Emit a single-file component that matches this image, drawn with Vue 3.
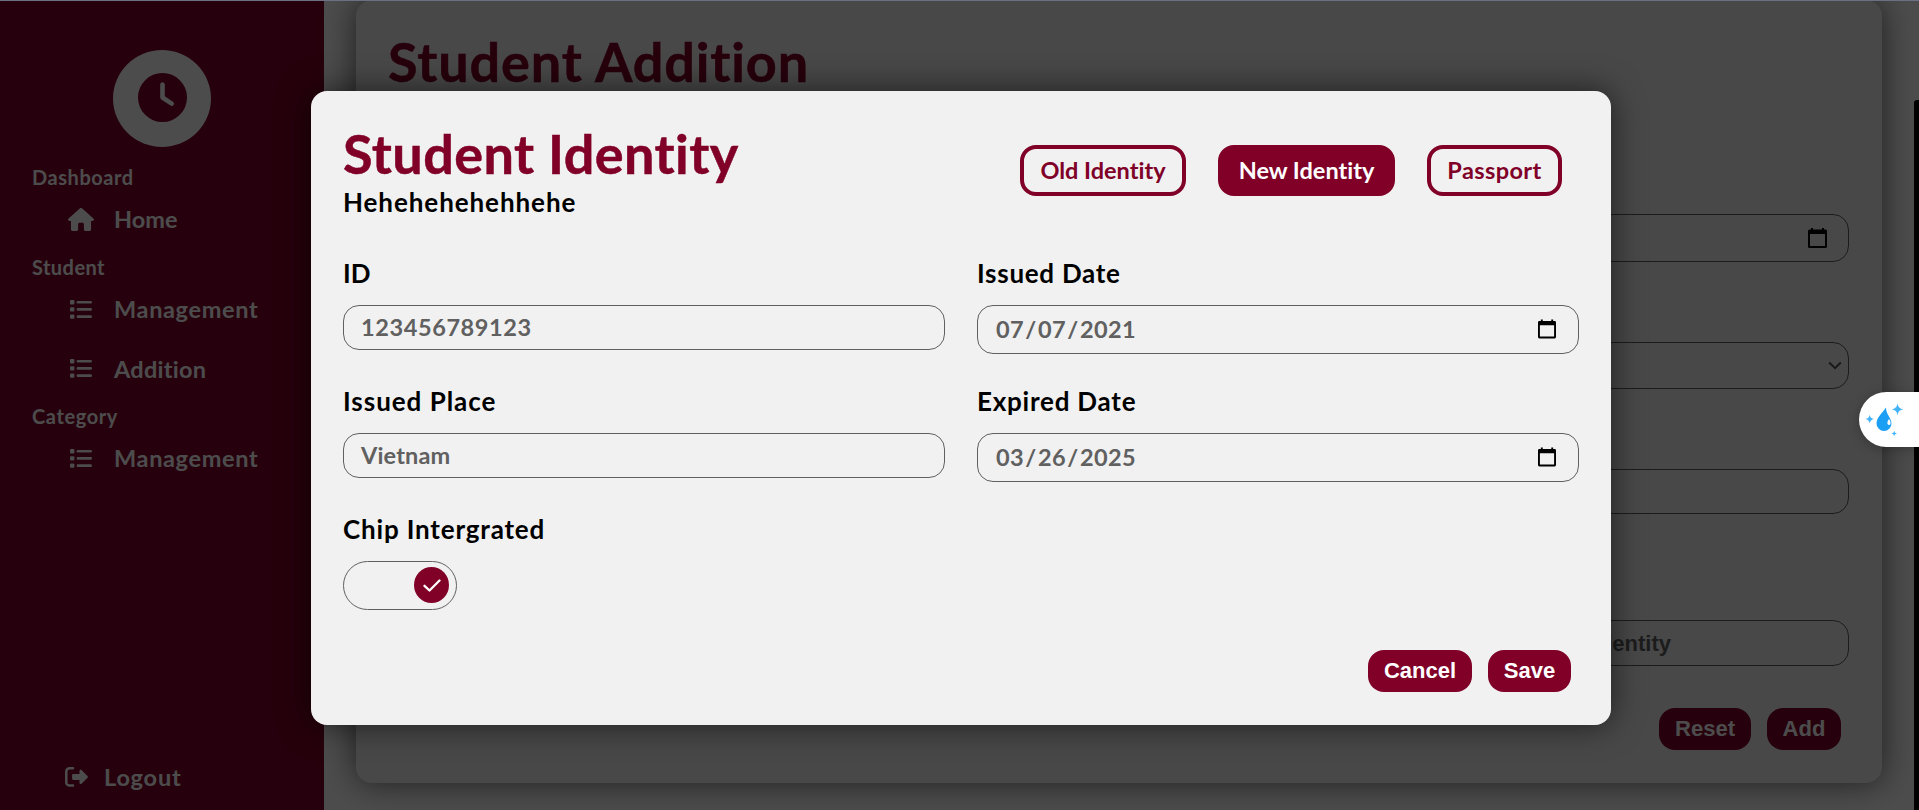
<script setup>
import { ref } from 'vue'

const menu = [
  { title: 'Dashboard', cls: 't-dash', items: [{ label: 'Home', icon: 'home', cls: 't-home' }] },
  {
    title: 'Student',
    cls: 't-student',
    items: [
      { label: 'Management', icon: 'list', cls: 't-manage' },
      { label: 'Addition', icon: 'list', cls: 't-addition' },
    ],
  },
  { title: 'Category', cls: 't-category', items: [{ label: 'Management', icon: 'list', cls: 't-manage' }] },
]
const tabs = [
  { label: 'Old Identity', cls: 'tab-old' },
  { label: 'New Identity', cls: 'tab-new' },
  { label: 'Passport', cls: 'tab-pass' },
]
const active = ref('New Identity')
const chip = ref(true)
</script>

<template>
  <div class="page">
    <aside class="sidebar">
      <div class="logo">
        <svg viewBox="0 0 512 512" width="49" height="49">
          <path fill="#800028" d="M256 0a256 256 0 1 1 0 512A256 256 0 1 1 256 0zM232 120V256c0 8 4 15.500 10.700 20l96 64c11 7.400 25.900 4.400 33.300-6.700s4.400-25.900-6.700-33.300L280 243.200V120c0-13.300-10.700-24-24-24s-24 10.700-24 24z" />
        </svg>
      </div>
      <nav class="menu">
        <section v-for="group in menu" :key="group.title">
          <h4 class="group"><span :class="group.cls">{{ group.title }}</span></h4>
          <a v-for="item in group.items" :key="item.label" class="item">
            <svg v-if="item.icon === 'home'" class="home-icon" viewBox="0 0 576 512" width="26" height="23">
              <path fill="#fff" d="M575.800 255.500c0 18-15 32.100-32 32.100h-32l.7 160.200c0 2.700-.2 5.400-.5 8.100V472c0 22.100-17.900 40-40 40H392c-22.100 0-40-17.900-40-40V360c0-17.700-14.300-32-32-32h-64c-17.700 0-32 14.300-32 32v112c0 22.100-17.900 40-40 40H104c-22.100 0-40-17.900-40-40V287.600H32c-18 0-32-14-32-32.100 0-9 3-17 10-24L266.400 8c7-7 15-8 22-8s15 2 21 7L564.800 231.500c8 7 12 15 11 24z" />
            </svg>
            <svg v-else class="list-icon" viewBox="0 0 22 19" width="22" height="19" fill="#fff">
              <rect x="0" y="0" width="4.400" height="4.400" rx="1" /><rect x="0" y="7.200" width="4.400" height="4.400" rx="1" /><rect x="0" y="14.400" width="4.400" height="4.400" rx="1" />
              <rect x="6.600" y="0.900" width="15.400" height="2.700" rx="1.350" /><rect x="6.600" y="8.100" width="15.400" height="2.700" rx="1.350" /><rect x="6.600" y="15.300" width="15.400" height="2.700" rx="1.350" />
            </svg>
            <span :class="item.cls">{{ item.label }}</span>
          </a>
        </section>
      </nav>
      <a class="logout">
        <svg viewBox="0 0 23 20" width="23" height="20">
          <path d="M8 1.200H4.500A3.200 3.200 0 0 0 1.300 4.400v11A3.200 3.200 0 0 0 4.500 18.600H8" fill="none" stroke="#fff" stroke-width="2.500" stroke-linecap="round" />
          <path d="M8.300 7h6.200V3.800c0-1 1.200-1.600 2-.8l6 6c.5.500.5 1.300 0 1.800l-6 6c-.8.800-2 .2-2-.8V12.900H8.300c-.7 0-1.200-.5-1.200-1.200V8.200c0-.7.5-1.200 1.200-1.200z" fill="#fff" />
        </svg>
        <span>Logout</span>
      </a>
    </aside>

    <main class="content">
      <div class="card">
        <h1 class="title t-add">Student Addition</h1>
        <div class="bg-fields">
          <div class="field h48 bg-date">
            <svg viewBox="0 0 19 20" width="19" height="20"><path fill="#000" fill-rule="evenodd" d="M3 0h2v1.500h9V0h2v1.500h1.500A1.500 1.500 0 0 1 19 3v15.500A1.500 1.500 0 0 1 17.500 20h-16A1.500 1.500 0 0 1 0 18.500V3a1.500 1.500 0 0 1 1.500-1.500H3zM2 6v12h15V6z" /></svg>
          </div>
          <div class="field h47 bg-select">
            <svg viewBox="0 0 14 9" width="14" height="9"><path d="M1.200 1.500 7 7.200l5.800-5.700" fill="none" stroke="#555" stroke-width="2" /></svg>
          </div>
          <div class="field h45"></div>
          <div class="field h46 bg-identity">Identity</div>
        </div>
        <div class="actions card-actions">
          <button class="btn w-reset">Reset</button>
          <button class="btn w-add">Add</button>
        </div>
      </div>
    </main>

    <div class="overlay">
      <section class="modal">
        <header class="modal-head">
          <div>
            <h1 class="title t-identity">Student Identity</h1>
            <p class="sub"><span class="t-hehe">Hehehehehehhehe</span></p>
          </div>
          <div class="tabs">
            <button v-for="t in tabs" :key="t.label" class="tab" :class="[t.cls, { active: active === t.label }]" @click="active = t.label">{{ t.label }}</button>
          </div>
        </header>
        <div class="grid">
          <div class="cell">
            <label><span class="t-id">ID</span></label>
            <div class="field h45"><span class="t-num">123456789123</span></div>
          </div>
          <div class="cell">
            <label><span class="t-issued">Issued Date</span></label>
            <div class="field h49"><span class="t-date"><span>07</span><i>/</i><span>07</span><i>/</i><span>2021</span></span>
              <svg class="cal" viewBox="0 0 19 20" width="18" height="20"><path fill="#000" fill-rule="evenodd" d="M3 0h2v1.500h9V0h2v1.500h1.500A1.500 1.500 0 0 1 19 3v15.500A1.500 1.500 0 0 1 17.500 20h-16A1.500 1.500 0 0 1 0 18.500V3a1.500 1.500 0 0 1 1.500-1.500H3zM2 6v12h15V6z" /></svg>
            </div>
          </div>
          <div class="cell">
            <label><span class="t-place">Issued Place</span></label>
            <div class="field h45"><span class="t-viet">Vietnam</span></div>
          </div>
          <div class="cell">
            <label><span class="t-expired">Expired Date</span></label>
            <div class="field h49"><span class="t-date"><span>03</span><i>/</i><span>26</span><i>/</i><span>2025</span></span>
              <svg class="cal" viewBox="0 0 19 20" width="18" height="20"><path fill="#000" fill-rule="evenodd" d="M3 0h2v1.500h9V0h2v1.500h1.500A1.500 1.500 0 0 1 19 3v15.500A1.500 1.500 0 0 1 17.500 20h-16A1.500 1.500 0 0 1 0 18.500V3a1.500 1.500 0 0 1 1.500-1.500H3zM2 6v12h15V6z" /></svg>
            </div>
          </div>
          <div class="cell">
            <label><span class="t-chip">Chip Intergrated</span></label>
            <div class="toggle" :class="{ on: chip }" @click="chip = !chip">
              <div class="knob">
                <svg viewBox="0 0 18 13" width="18" height="13"><path d="M1.500 6.800 6.500 11.500 16.500 1.500" fill="none" stroke="#fff" stroke-width="2.300" stroke-linecap="round" stroke-linejoin="round" /></svg>
              </div>
            </div>
          </div>
        </div>
        <div class="actions modal-actions">
          <button class="btn w-cancel">Cancel</button>
          <button class="btn w-save">Save</button>
        </div>
      </section>
    </div>

    <div class="scrollbar"></div>
    <div class="widget">
      <svg viewBox="0 0 60 55" width="60" height="55">
        <path d="M27 15.500c-3 5-9.500 9.500-9.500 16a7.500 7.500 0 0 0 15 0c0-5.500-5.500-9-5.500-16z" fill="#1b9ff5" />
        <path d="M30 27c-2 2.500-2.300 5.800 0 6 2.200.1 2-3.500 0-6z" fill="#fff" />
        <path d="M38.500 11.500Q39.200 16.600 44.300 17.300 39.200 18 38.500 23.200 37.800 18 32.700 17.300 37.800 16.600 38.500 11.500zM10.700 22.700Q11.300 26.400 15 27 11.300 27.600 10.700 31.400 10.100 27.600 6.500 27 10.100 26.400 10.700 22.700zM35.200 38.800Q35.500 41.200 38 41.500 35.500 41.800 35.200 44.300 34.900 41.800 32.400 41.500 34.900 41.200 35.200 38.800z" fill="#45b3f8" />
      </svg>
    </div>
    <div class="topline"></div>
  </div>
</template>

<style>
body { margin: 0; overflow: hidden; background: #fff; }
</style>

<style scoped>
* { box-sizing: border-box; margin: 0; }
.page {
  position: relative;
  display: flex;
  width: 1919px;
  height: 810px;
  overflow: hidden;
  background: #fff;
  font-family: Lato, "Open Sans", sans-serif;
  font-weight: 700;
  font-variant-ligatures: none;
}
span { white-space: nowrap; }
.sidebar { width: 324px; height: 810px; background: #800028; display: flex; flex-direction: column; color: #fff; }
.logo { width: 98px; height: 97px; margin: 50px 0 0 113px; border-radius: 50%; background: #fff; display: flex; align-items: center; justify-content: center; padding-bottom: 2px; flex: none; }
.menu { padding: 15px 0 0 32px; }
.group { height: 30px; line-height: 30px; font-size: 20px; font-weight: 700; }
.item { display: flex; align-items: center; height: 59.700px; padding: 0 0 5px 38px; font-size: 23.500px; line-height: 54px; }
.item svg { flex: none; width: 22px; margin-right: 22px; }
.item .home-icon { width: 26px; margin: 0 20px 0 -2px; }
.t-dash { letter-spacing: .550px; }
.t-student { letter-spacing: .450px; }
.t-category { letter-spacing: .6px; }
.t-manage { letter-spacing: .650px; }
.t-addition { letter-spacing: .250px; }
.logout { display: flex; align-items: center; height: 40px; margin: auto 0 13px 65px; font-size: 23.500px; letter-spacing: .8px; }
.logout svg { margin-right: 16px; }
.content { flex: 1; padding: 0 37px 27px 32px; }
.card { height: 783px; border-radius: 16px; background: #f1f1f1; box-shadow: 0 0 32px rgba(0, 0, 0, .6); padding: 30px 33px 32px 32px; }
.title { font-size: 54px; line-height: 64px; height: 64px; font-weight: 700; color: #800028; white-space: nowrap; -webkit-text-stroke: 0.500px currentColor; }
.t-add { letter-spacing: .870px; }
.t-identity { letter-spacing: .420px; line-height: 61px; }
.bg-fields { display: flex; flex-direction: column; align-items: flex-end; margin-top: 120px; }
.bg-fields .field { width: 466px; }
.field { display: flex; align-items: center; border: 1px solid #606060; border-radius: 16px; padding: 0 17px 2px; font-size: 23.500px; color: #606060; }
.h45 { height: 45px; }
.h46 { height: 46px; }
.h47 { height: 47px; }
.h48 { height: 48px; }
.h49 { height: 49px; }
.bg-date { justify-content: flex-end; padding: 0 21px 0 0; margin-bottom: 80px; }
.bg-select { justify-content: flex-end; padding: 0 6px 0 0; margin-bottom: 80px; }
.bg-fields .bg-identity { margin-top: 106px; justify-content: flex-end; padding: 1px 177px 0 0; font: 700 22px "Liberation Sans", sans-serif; }
.actions { display: flex; justify-content: flex-end; gap: 16px; padding-right: 8px; }
.card-actions { margin-top: 42px; }
.btn { height: 42px; border: 0; border-radius: 16px; padding: 0; background: #800028; color: #fff; font: 700 22px "Liberation Sans", Arial, sans-serif; }
.w-reset { width: 92px; }
.w-add { width: 74px; }
.w-cancel { width: 104px; }
.w-save { width: 83px; }
.overlay { position: absolute; inset: 0; background: rgba(0, 0, 0, .7); display: flex; justify-content: center; align-items: flex-start; padding: 91px 0 0 3px; }
.modal { width: 1300px; height: 634px; border-radius: 16px; background: #f1f1f1; box-shadow: 0 0 32px rgba(0, 0, 0, .6); padding: 32px; color: #000; }
.modal-head { display: flex; justify-content: space-between; height: 128px; }
.sub { height: 32px; line-height: 31px; font-size: 26px; }
.t-hehe { letter-spacing: .920px; }
.tabs { display: flex; gap: 32px; padding: 22px 17px 0 0; }
.tab { height: 51px; border: 4px solid #800028; border-radius: 16px; background: transparent; color: #800028; font: 700 23.500px Lato, sans-serif; padding: 0 0 2px; white-space: nowrap; font-variant-ligatures: none; }
.tab.active { background: #800028; color: #fff; }
.tab-old { width: 166px; }
.tab-new { width: 177px; }
.tab-pass { width: 135px; letter-spacing: .4px; }
.grid { display: grid; grid-template-columns: 602px 602px; column-gap: 32px; grid-auto-rows: 128px; }
.cell label { display: block; height: 54px; line-height: 45px; font-size: 26px; }
.t-issued { letter-spacing: .720px; }
.t-place { letter-spacing: .970px; }
.t-expired { letter-spacing: .770px; }
.t-chip { letter-spacing: .820px; }
.t-num { letter-spacing: .6px; }
.t-viet { letter-spacing: .150px; }
.t-date { display: flex; letter-spacing: .350px; margin-left: 1px; }
.t-date i { font-style: normal; width: 14px; text-align: center; }
.cal { margin: 0 5px 0 auto; }
.toggle { display: flex; align-items: center; width: 114px; height: 49px; border: 1px solid #606060; border-radius: 25px; padding: 0 7px 1px; }
.toggle.on { justify-content: flex-end; }
.knob { width: 35px; height: 36px; border-radius: 50%; background: #800028; display: flex; align-items: center; justify-content: center; }
.modal-actions { margin-top: 15px; }
.scrollbar { position: absolute; right: 0; top: 100px; width: 5px; height: 710px; background: #000; border-radius: 3px 0 0 0; }
.widget { position: absolute; right: 0; top: 392px; width: 60px; height: 55px; background: #fff; border-radius: 28px 0 0 28px; box-shadow: 0 2px 12px rgba(0, 0, 0, .25); }
.topline { position: absolute; left: 0; top: 0; width: 100%; height: 1px; background: #6b7086; }
</style>
